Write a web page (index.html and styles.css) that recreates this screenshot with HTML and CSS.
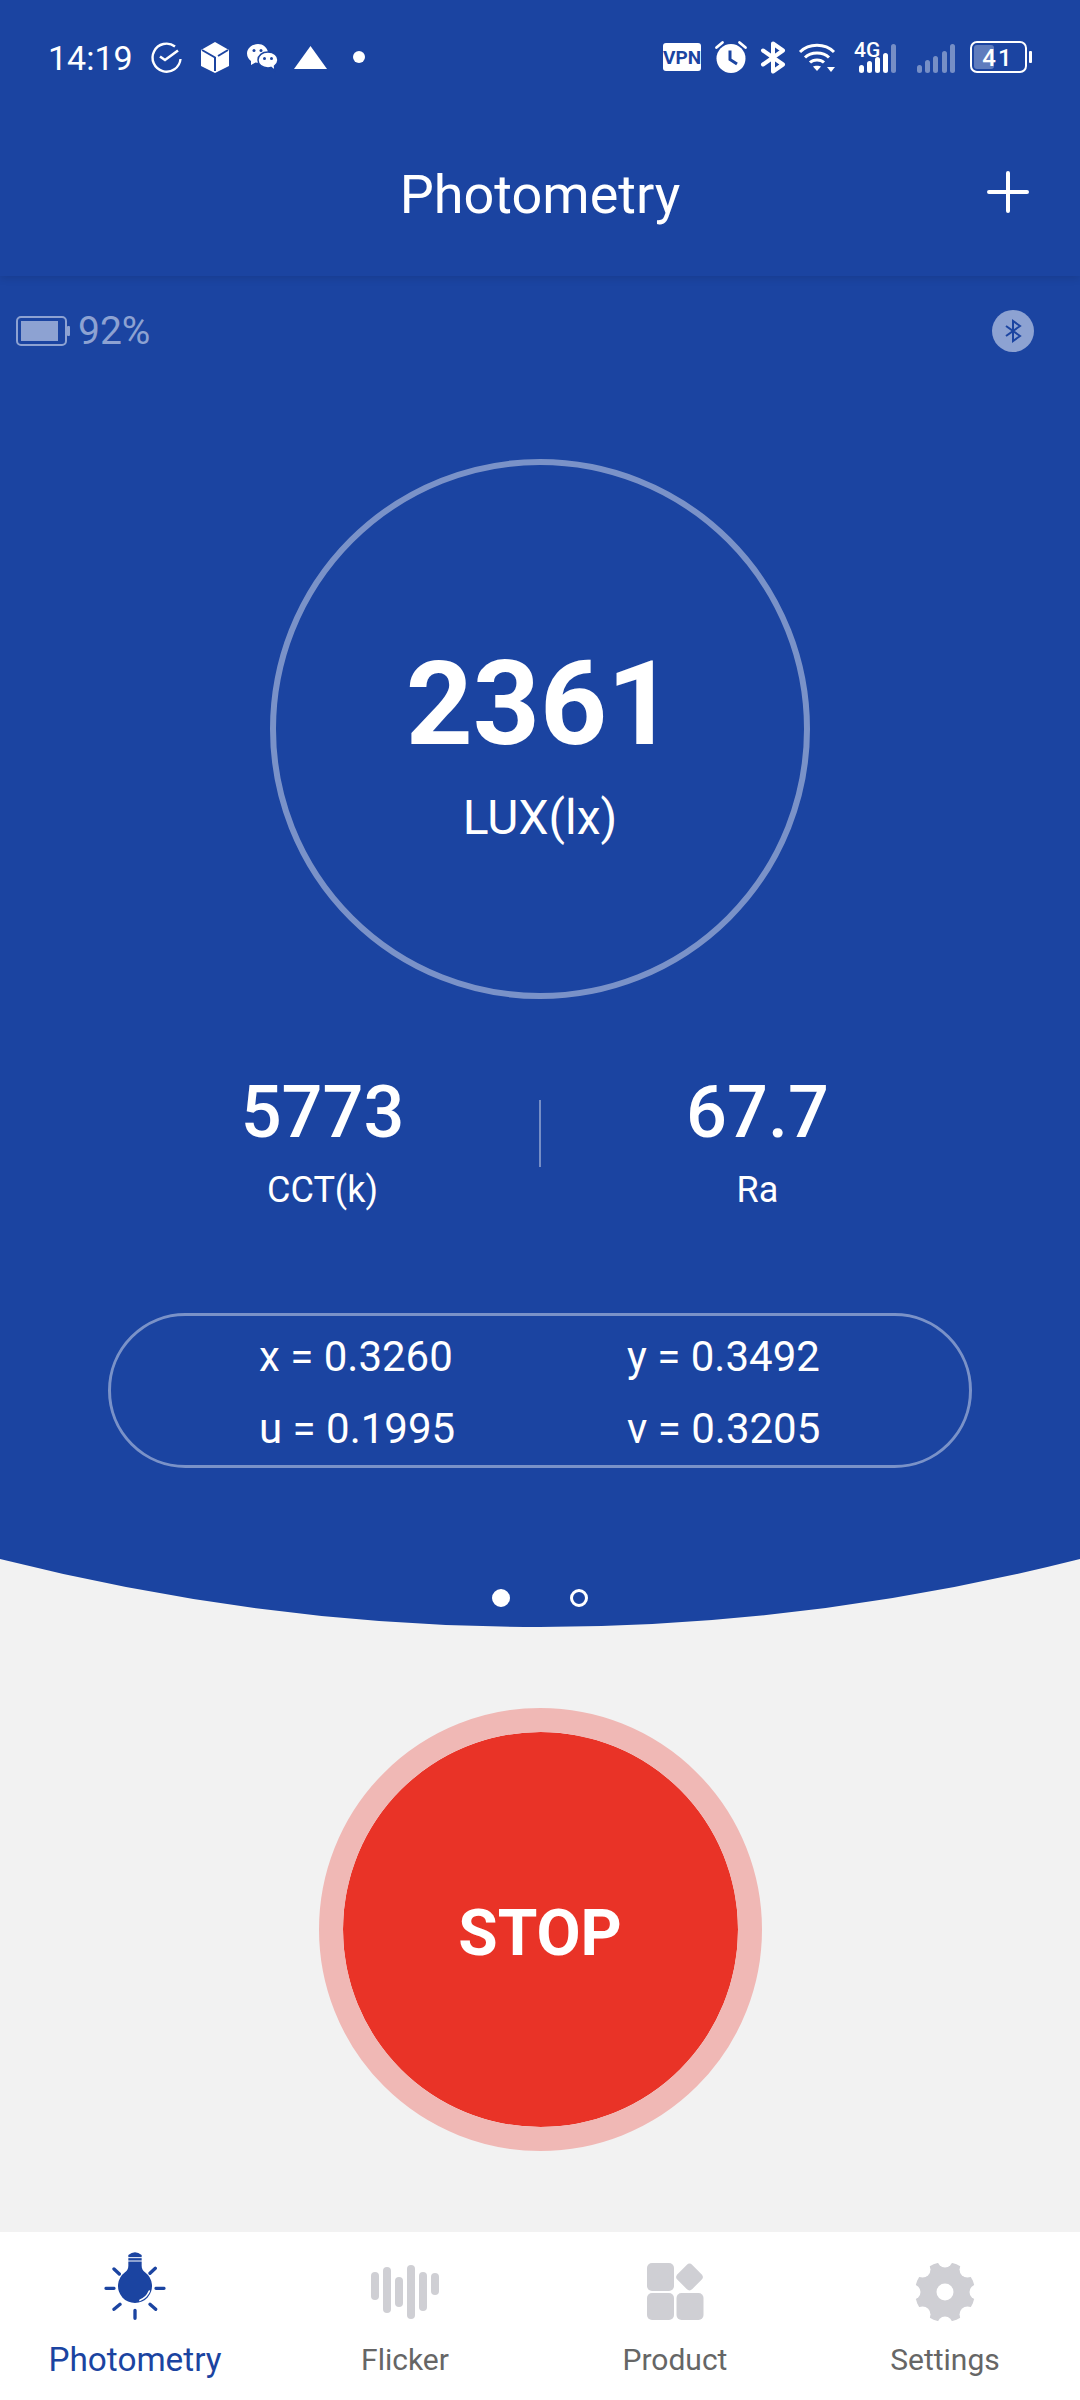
FILE: index.html
```html
<!DOCTYPE html>
<html lang="en">
<head>
  <meta charset="UTF-8">
  <meta name="viewport" content="width=device-width, initial-scale=1.0">
  <title>Photometry</title>
  <link rel="stylesheet" href="styles.css">
</head>
<body>
  <div class="page">
    <header class="top">
      <div class="status">
        <div class="status-left">
          <span class="time">14:19</span>
          <svg class="ic-clock" width="31" height="31" viewBox="0 0 31 31"><path d="M24 4.500A14 14 0 1 0 29.500 17" fill="none" stroke="#fff" stroke-width="2.400"/><path d="M9 14.500l5 3.500L27 8.500" fill="none" stroke="#fff" stroke-width="2.600"/></svg>
          <svg class="ic-box" width="28" height="31" viewBox="0 0 28 31"><path d="M14 0L28 8V24L14 31L0 24V8Z" fill="#fff"/><path d="M1 8L14 15.500V29M27 8L17 14" fill="none" stroke="#1b44a1" stroke-width="2"/></svg>
          <svg class="ic-chat" width="31" height="27" viewBox="0 0 31 27"><path d="M11 0C5 0 0 4 0 9.500C0 13 2 15.500 4 17L4 21L8.500 18.500C11 19 14 19 16 18L21 8C20 3.500 16 0 11 0Z" fill="#fff"/><path d="M21 8C15 8 11 11.500 11 16C11 20.500 15 24 21 24C22 24 23 24 24 23.500L28 26.500L27.500 22C29.500 20.500 31 18.500 31 16C31 11.500 27 8 21 8Z" fill="#fff" stroke="#1b44a1" stroke-width="1.500"/><circle cx="7" cy="6.500" r="1.500" fill="#1b44a1"/><circle cx="14" cy="6.500" r="1.500" fill="#1b44a1"/><circle cx="17.500" cy="14.500" r="1.500" fill="#1b44a1"/><circle cx="24.500" cy="14.500" r="1.500" fill="#1b44a1"/></svg>
          <svg class="ic-warn" width="33" height="23" viewBox="0 0 33 23"><path d="M16.500 0L33 23H0Z" fill="#fff"/></svg>
          <span class="status-dot"></span>
        </div>
        <div class="status-right">
          <svg class="ic-vpn" width="38" height="28" viewBox="0 0 38 28"><rect width="38" height="28" rx="3" fill="#fff"/><text class="vpn-text" x="19" y="20.500" text-anchor="middle">VPN</text></svg>
          <svg class="ic-alarm" width="32" height="32" viewBox="0 0 32 32"><circle cx="16" cy="17.500" r="14.500" fill="#fff"/><path d="M15 9.500V18.500L22 23" fill="none" stroke="#1b44a1" stroke-width="3"/><path d="M1.500 6.500L7.500 1.500M30.500 6.500L24.500 1.500" stroke="#fff" stroke-width="2.800" stroke-linecap="round"/></svg>
          <svg class="ic-bt" width="24" height="31" viewBox="0 0 24 31"><path d="M2 8.500L22 22.500L12 29.500V1.500L22 8.500L2 22.500" fill="none" stroke="#fff" stroke-width="4" stroke-linejoin="round" stroke-linecap="round"/></svg>
          <svg class="ic-wifi" width="36" height="29" viewBox="0 0 36 29"><path d="M1 9C10 0 26 0 35 9M6 14.500C12 8.500 24 8.500 30 14.500M11 19.500C14.500 16 21.500 16 25 19.500" fill="none" stroke="#fff" stroke-width="3"/><path d="M14 23.500C15.500 22.500 20.500 22.500 22 23.500L18 28Z" fill="#fff"/><path d="M28 24H36L32 29Z" fill="#fff"/></svg>
          <svg class="ic-sig" width="42" height="32" viewBox="0 0 42 32"><text class="sig-text" x="0" y="16">4G</text><rect x="5" y="24" width="5" height="8" rx="2.500" fill="#fff"/><rect x="13" y="20" width="5" height="12" rx="2.500" fill="#fff"/><rect x="21" y="16" width="5" height="16" rx="2.500" fill="#fff"/><rect x="29" y="12" width="5" height="20" rx="2.500" fill="#fff"/><rect x="37" y="3" width="5" height="29" rx="2.500" fill="#fff" opacity=".4"/></svg>
          <svg class="ic-sig2" width="38" height="32" viewBox="0 0 38 32"><g fill="#fff" opacity=".4"><rect x="0" y="24" width="5" height="8" rx="2.500"/><rect x="8" y="19" width="5" height="13" rx="2.500"/><rect x="16" y="15" width="5" height="17" rx="2.500"/><rect x="25" y="10" width="5" height="22" rx="2.500"/><rect x="33" y="3" width="5" height="29" rx="2.500"/></g></svg>
          <svg class="ic-batt" width="62" height="32" viewBox="0 0 62 32"><rect x="1" y="1" width="55" height="30" rx="6" fill="none" stroke="#fff" stroke-width="2"/><rect x="4" y="4" width="20" height="24" rx="3" fill="#fff" opacity=".3"/><rect x="59" y="10" width="3" height="12" rx="1" fill="#fff"/><text class="batt-text" x="28" y="24.500" text-anchor="middle">41</text></svg>
        </div>
      </div>
      <div class="appbar">
        <span></span>
        <h1 class="title">Photometry</h1>
        <svg class="plus" width="42" height="42" viewBox="0 0 42 42"><path d="M21 2V40M2 21H40" stroke="#fff" stroke-width="4" stroke-linecap="round"/></svg>
      </div>
    </header>

    <section class="hero">
      <div class="device">
        <div class="device-batt">
          <svg width="54" height="30" viewBox="0 0 54 30"><rect x="1" y="1" width="49" height="28" rx="4" fill="none" stroke="#8da2d2" stroke-width="2"/><rect x="5" y="5" width="37" height="20" fill="#8da2d2"/><rect x="51" y="10" width="3" height="10" rx="1" fill="#8da2d2"/></svg>
          <span class="device-pct">92%</span>
        </div>
        <svg class="device-bt" width="42" height="42" viewBox="0 0 42 42"><circle cx="21" cy="21" r="21" fill="#8da2d2"/><path d="M14 16L28 26L21 31V11L28 16L14 26" fill="none" stroke="#1b44a1" stroke-width="2"/></svg>
      </div>

      <div class="gauge">
        <div class="gauge-num">2361</div>
        <div class="gauge-unit">LUX(lx)</div>
      </div>

      <div class="stats">
        <div class="stat">
          <div class="stat-num">5773</div>
          <div class="stat-label">CCT(k)</div>
        </div>
        <div class="stat-line"></div>
        <div class="stat">
          <div class="stat-num">67.7</div>
          <div class="stat-label">Ra</div>
        </div>
      </div>

      <div class="coords">
        <span>x = 0.3260</span>
        <span>y = 0.3492</span>
        <span>u = 0.1995</span>
        <span>v = 0.3205</span>
      </div>
    </section>

    <div class="curve">
      <svg width="1080" height="68" viewBox="0 0 1080 68"><path d="M0 0H1080Q540 136 0 0Z" fill="#1b44a1"/></svg>
      <div class="pager">
        <span class="pager-dot on"></span>
        <span class="pager-dot"></span>
      </div>
    </div>

    <main class="action">
      <button class="stop" type="button"><span class="stop-in">STOP</span></button>
    </main>

    <nav class="tabs">
      <div class="tab active">
        <svg width="90" height="80" viewBox="0 0 270 240">
          <path d="M115 30Q135 14 155 30V62Q155 74 165 82A51 51 0 1 1 105 82Q115 74 115 62Z" fill="#1b44a1"/>
          <path d="M112 38H158M112 48H158" stroke="#fff" stroke-width="3"/>
          <path d="M150 166Q170 158 178 138" fill="none" stroke="#fff" stroke-width="5" stroke-linecap="round"/>
          <path d="M72 72L88 87M196 70L180 85M48 130H72M198 130H222M72 193L90 178M180 178L197 193M135 196V220" stroke="#1b44a1" stroke-width="10" stroke-linecap="round"/>
        </svg>
        <span class="tab-label">Photometry</span>
      </div>
      <div class="tab">
        <svg width="90" height="80" viewBox="0 0 90 80" fill="#cfcfd4">
          <rect x="11" y="27" width="8" height="28" rx="4"/>
          <rect x="23" y="22" width="8" height="46" rx="4"/>
          <rect x="35" y="32" width="8" height="30" rx="4"/>
          <rect x="47" y="20" width="8" height="54" rx="4"/>
          <rect x="59" y="27" width="8" height="39" rx="4"/>
          <rect x="71" y="28" width="8" height="22" rx="4"/>
        </svg>
        <span class="tab-label">Flicker</span>
      </div>
      <div class="tab">
        <svg width="90" height="80" viewBox="0 0 90 80" fill="#cfcfd4">
          <rect x="17" y="18" width="27" height="28" rx="5"/>
          <rect x="17" y="48" width="27" height="27" rx="5"/>
          <rect x="46.500" y="48" width="27" height="27" rx="5"/>
          <rect x="49" y="21.500" width="21" height="21" rx="4" transform="rotate(45 59.500 32)"/>
        </svg>
        <span class="tab-label">Product</span>
      </div>
      <div class="tab">
        <svg width="90" height="80" viewBox="0 0 90 80">
          <circle cx="45" cy="47" r="30" fill="#cfcfd4"/>
          <g fill="#fff">
            <circle cx="45" cy="47" r="8.500"/>
            <circle cx="45" cy="15" r="7.500"/>
            <circle cx="45" cy="79" r="7.500"/>
            <circle cx="13" cy="47" r="7.500"/>
            <circle cx="77" cy="47" r="7.500"/>
            <circle cx="22.500" cy="24.500" r="8"/>
            <circle cx="67.500" cy="24.500" r="8"/>
            <circle cx="22.500" cy="69.500" r="8"/>
            <circle cx="67.500" cy="69.500" r="8"/>
          </g>
        </svg>
        <span class="tab-label">Settings</span>
      </div>
    </nav>
  </div>
</body>
</html>
```

FILE: styles.css
```css
* {
  box-sizing: border-box;
}
body {
  margin: 0;
  font-family: Roboto, "Liberation Sans", sans-serif;
  background-color: #f2f2f2;
  color: #fff;
}
.page {
  width: 1080px;
  height: 2400px;
  display: flex;
  flex-direction: column;
  overflow: hidden;
}

/* status bar + title */
.top {
  height: 276px;
  background-color: #1b44a1;
  box-shadow: 0 2px 8px rgba(0,0,0,0.12);
  position: relative; /* keeps the shadow above the hero */
  z-index: 1;
}
.status {
  height: 112px;
  padding: 41px 48px 0;
  display: flex;
  justify-content: space-between;
  align-items: flex-start;
}
.status svg {
  display: block;
  flex: none;
  overflow: visible;
}
.status-left, .status-right {
  display: flex;
  align-items: center;
  height: 32px;
}
.time {
  font-size: 34px;
  line-height: 32px;
  width: 82px;
  margin-top: 2px;
}
.ic-clock { margin-left: 21px; }
.ic-box { margin-left: 19px; }
.ic-chat { margin-left: 18px; }
.ic-warn { margin-left: 16px; }
.status-dot {
  width: 12px;
  height: 12px;
  margin-left: 26px;
  border-radius: 50%;
  background-color: #fff;
}
.ic-alarm, .ic-bt, .ic-wifi { margin-left: 14px; }
.ic-sig { margin-left: 19px; }
.ic-sig2 { margin-left: 21px; }
.ic-batt { margin-left: 15px; }
.vpn-text {
  font: 700 19px Roboto, sans-serif;
  fill: #1b44a1;
}
.sig-text {
  font: 500 21px Roboto, sans-serif;
  fill: #fff;
}
.batt-text {
  font: 500 24px Roboto, sans-serif;
  letter-spacing: 2px;
  fill: #fff;
}
.appbar {
  display: grid;
  grid-template-columns: 1fr auto 1fr;
  align-items: center;
  padding: 0 51px;
  height: 164px;
}
.title {
  margin: 1px 0 0;
  font-size: 54px;
  font-weight: 400;
  line-height: 60px;
}
.plus {
  justify-self: end;
  margin-top: -4px;
}

/* blue measuring area */
.hero {
  height: 1283px;
  background-color: #1b44a1;
  display: flex;
  flex-direction: column;
  align-items: center;
}
.device {
  width: 100%;
  height: 42px;
  margin-top: 34px;
  padding: 0 46px 0 16px;
  display: flex;
  justify-content: space-between;
  align-items: center;
}
.device-batt {
  display: flex;
  align-items: center;
  gap: 8px;
}
.device-pct {
  font-size: 39px;
  color: #8da2d2;
}
.gauge {
  width: 540px;
  height: 540px;
  margin-top: 107px;
  border: 6px solid rgba(255,255,255,0.42);
  border-radius: 50%;
  display: flex;
  flex-direction: column;
  align-items: center;
  justify-content: center;
}
.gauge-num {
  font-size: 117px;
  font-weight: 700;
  line-height: 120px;
  margin-top: 32px;
}
.gauge-unit {
  font-size: 48px;
  line-height: 56px;
  margin-top: 26px;
}
.stats {
  display: flex;
  align-items: center;
  margin-top: 72px;
}
.stat {
  width: 433px;
  text-align: center;
}
.stat-num {
  font-size: 72px;
  font-weight: 500;
  line-height: 84px;
}
.stat-label {
  font-size: 36px;
  line-height: 42px;
  margin-top: 14px;
}
.stat-line {
  width: 2px;
  height: 67px;
  margin-top: -15px;
  background-color: rgba(255,255,255,0.4);
}
.coords {
  width: 864px;
  height: 155px;
  margin-top: 102px;
  padding: 5px 0 0 148px;
  border: 3px solid rgba(255,255,255,0.42);
  border-radius: 78px;
  display: grid;
  grid-template-columns: 368px 1fr;
  grid-auto-rows: 72px;
  font-size: 42px;
  line-height: 72px;
  align-content: start;
}

.curve {
  position: relative;
  height: 68px;
}
.curve svg {
  display: block;
}
.pager {
  position: absolute; /* sits on top of the curve */
  left: 0;
  right: 0;
  top: 30px;
  display: flex;
  justify-content: center;
  gap: 60px;
}
.pager-dot {
  width: 18px;
  height: 18px;
  border: 3px solid #fff;
  border-radius: 50%;
}
.pager-dot.on {
  background-color: #fff;
}

/* start / stop */
.action {
  flex: 1;
  display: flex;
  align-items: center;
  justify-content: center;
}
.stop {
  width: 443px;
  height: 443px;
  padding: 7px 0 0;
  border: 24px solid #f0b8b5;
  border-radius: 50%;
  background-color: #e93327;
  background-clip: padding-box;
  color: #fff;
  font-family: inherit;
  font-size: 64px;
  font-weight: 700;
}

/* bottom nav */
.tabs {
  height: 168px;
  background-color: #fff;
  display: grid;
  grid-template-columns: repeat(4, 270px);
}
.tab {
  display: flex;
  flex-direction: column;
  align-items: center;
  padding-top: 13px;
  color: #666;
}
.tab svg {
  display: block;
}
.tab.active {
  color: #1b44a1;
}
.tab-label {
  font-size: 30px;
  line-height: 36px;
  margin-top: 17px;
}
.tab.active .tab-label {
  font-size: 33.3px;
}
```
